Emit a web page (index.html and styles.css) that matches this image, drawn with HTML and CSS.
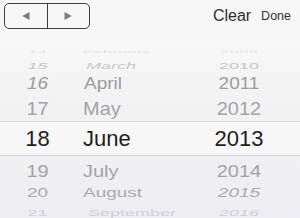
FILE: index.html
```html
<!DOCTYPE html>
<html>
<head>
<meta charset="utf-8">
<link rel="stylesheet" href="styles.css">
</head>
<body>
<div class="toolbar">
  <div class="seg">
    <div class="seg-btn">
      <svg width="8" height="8" viewBox="0 0 8 8"><polygon points="7.5,0 7.5,8 0.3,4" fill="#7c7c7c"/></svg>
    </div>
    <div class="seg-btn seg-right">
      <svg width="8" height="8" viewBox="0 0 8 8"><polygon points="0.5,0 0.5,8 7.7,4" fill="#7c7c7c"/></svg>
    </div>
  </div>
  <div class="clear">Clear</div>
  <div class="done">Done</div>
</div>
<div class="picker">
  <div class="row r14"><span class="d">14</span><span class="m">February</span><span class="y">2009</span></div>
  <div class="row r15"><span class="d it">15</span><span class="m it">March</span><span class="y">2010</span></div>
  <div class="row r16"><span class="d it">16</span><span class="m">April</span><span class="y">2011</span></div>
  <div class="row r17"><span class="d">17</span><span class="m">May</span><span class="y">2012</span></div>
  <div class="row sel"><span class="d">18</span><span class="m">June</span><span class="y">2013</span></div>
  <div class="row r19"><span class="d">19</span><span class="m">July</span><span class="y">2014</span></div>
  <div class="row r20"><span class="d">20</span><span class="m">August</span><span class="y it">2015</span></div>
  <div class="row r21"><span class="d">21</span><span class="m">September</span><span class="y it">2016</span></div>
</div>
</body>
</html>
```
FILE: styles.css
```css
html, body {
  margin: 0;
  padding: 0;
}
body {
  width: 300px;
  height: 218px;
  overflow: hidden;
  background: #f7f7f7;
  font-family: "Liberation Sans", Arial, sans-serif;
}
.toolbar {
  height: 44px;
  box-sizing: border-box;
  padding: 3px 9px 0 4px;
  display: flex;
  align-items: flex-start;
  gap: 10px;
  background: #f7f7f7;
}
.seg {
  width: 86px;
  height: 26px;
  box-sizing: border-box;
  border: 1px solid #3e3e3e;
  border-radius: 5px;
  display: flex;
}
.seg-btn {
  flex: 1;
  display: flex;
  align-items: center;
  justify-content: center;
}
.seg-right {
  border-left: 1px solid #3e3e3e;
}
.clear {
  margin-left: auto;
  font-size: 16px;
  line-height: 26px;
  color: #2e2e2e;
}
.done {
  font-size: 12.5px;
  line-height: 26px;
  color: #333;
}
.picker {
  background: linear-gradient(#f8f8f8 0px, #f3f3f4 40px, #f0f0f3 110px, #eeeef2 174px);
}
.row {
  display: grid;
  grid-template-columns: 75px 125px 78px;
  text-align: center;
  overflow: visible;
}
.row span {
  display: inline-block;
  white-space: nowrap;
}
.row .m {
  text-align: left;
  padding-left: 8px;
}
.it {
  font-style: italic;
}
.r14 {
  height: 16px;
  line-height: 16px;
  font-size: 17px;
  color: #e2e2e4;
}
.r14 span { transform: scaleY(0.22); }
.r15 {
  height: 12px;
  line-height: 12px;
  font-size: 18px;
  color: #c6c6c9;
}
.r15 span { transform: scaleY(0.52); }
.r15 .m { padding-left: 11px; }
.r16 {
  height: 24px;
  line-height: 24px;
  font-size: 19px;
  color: #9c9c9f;
}
.r16 span { transform: scaleY(0.86); }
.r16 .m { padding-left: 9px; }
.r17 {
  height: 25px;
  line-height: 25px;
  font-size: 20px;
  color: #a3a3a6;
}
.r17 span { transform: scaleY(0.94); }
.sel {
  height: 35px;
  line-height: 33px;
  box-sizing: border-box;
  border-top: 1px solid #d7d7db;
  border-bottom: 1px solid #d7d7db;
  background: #f7f7f8;
  font-size: 22px;
  color: #1e1e1e;
}
.r19 {
  height: 30px;
  line-height: 30px;
  font-size: 20px;
  color: #a3a3a6;
}
.r19 span { transform: scaleY(0.85); }
.r20 {
  height: 14px;
  line-height: 14px;
  font-size: 19px;
  color: #aaaaad;
}
.r20 span { transform: scaleY(0.66); }
.r21 {
  height: 26px;
  line-height: 26px;
  font-size: 18px;
  color: #d0d0d4;
}
.r21 span { transform: scaleY(0.5); }
.r21 .m { padding-left: 13px; }
```
